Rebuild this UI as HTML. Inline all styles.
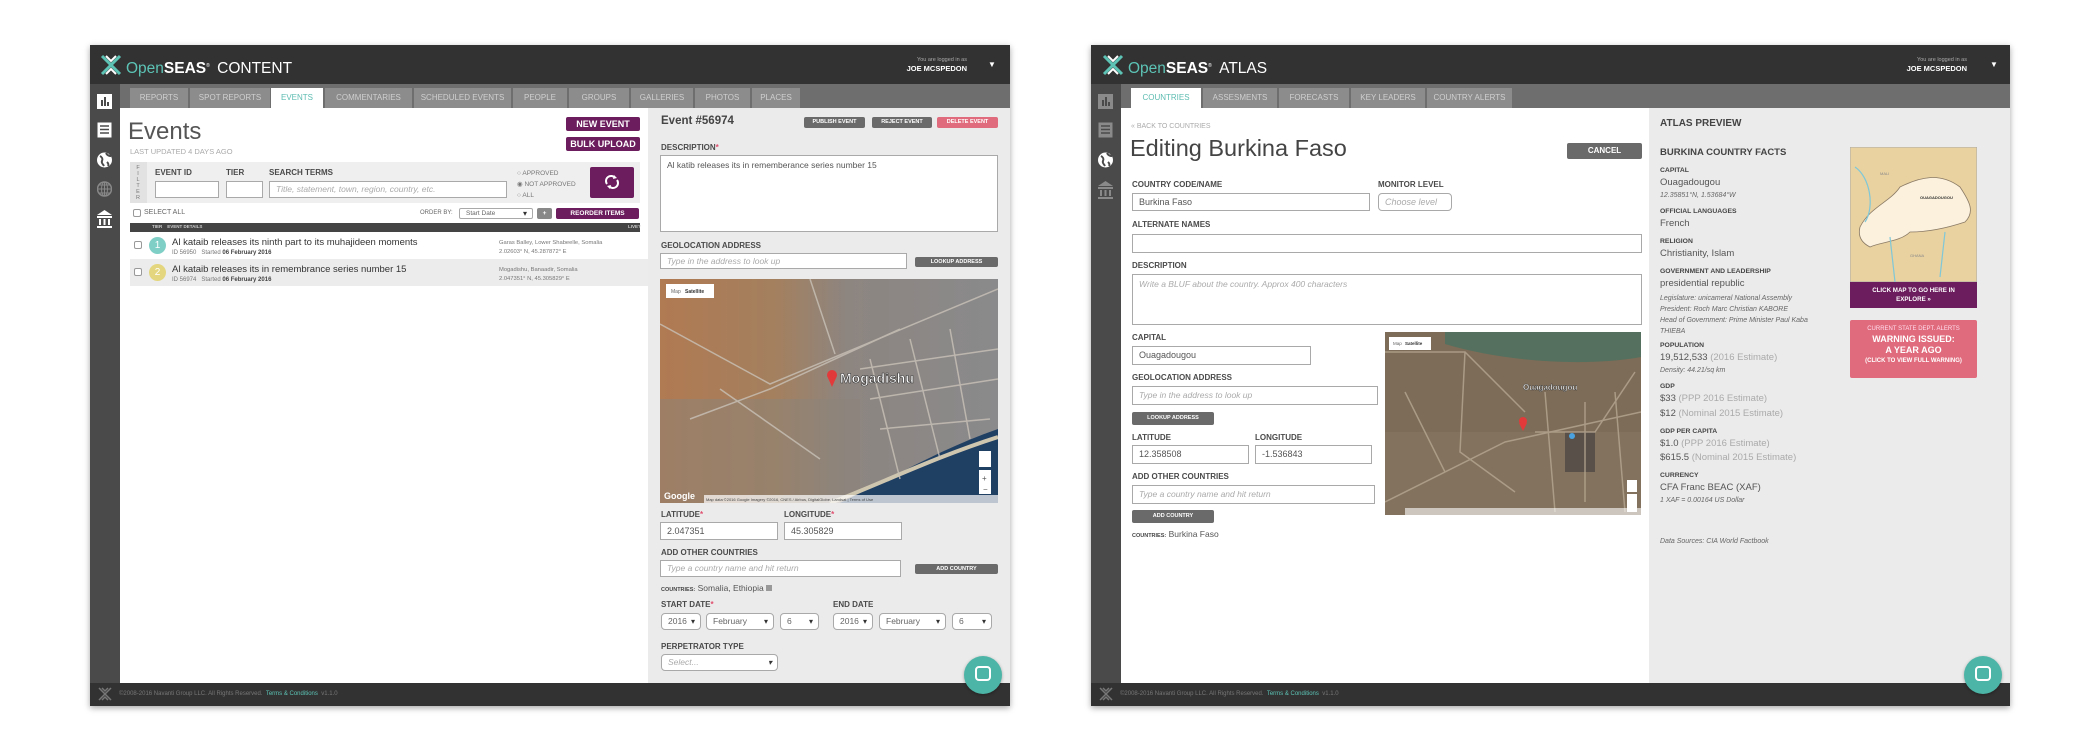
<!DOCTYPE html>
<html><head><meta charset="utf-8">
<style>
*{margin:0;padding:0;box-sizing:border-box}
body{width:2100px;height:750px;background:#fff;position:relative;overflow:hidden;font-family:"Liberation Sans",sans-serif;color:#444}
.a{position:absolute}
.lbl{position:absolute;font-weight:bold;font-size:8px;color:#4a4a4a;text-transform:uppercase;white-space:nowrap}
.inp{position:absolute;background:#fff;border:1px solid #a9a9a9;font-size:9px;color:#555;padding-left:6px;white-space:nowrap;overflow:hidden}
.ph{color:#aaa;font-style:italic}
.btn{position:absolute;background:#6a6a6a;color:#fff;font-weight:bold;font-size:6.5px;text-align:center;border-radius:2px;white-space:nowrap}
.pbtn{position:absolute;background:#6b1d5d;color:#fff;font-weight:bold;font-size:9px;text-align:center;border-radius:2px}
.tab{position:absolute;top:88px;height:20px;background:#8c8c8c;color:#cfcfcf;font-size:8px;text-align:center;line-height:20px;white-space:nowrap}
.tab.on{background:#fff;color:#5cbcb1}
.sel{position:absolute;background:#fff;border:1px solid #a9a9a9;border-radius:4px;font-size:8.5px;color:#666;padding-left:6px;white-space:nowrap}
.sel:after{content:"▾";position:absolute;right:5px;font-size:8px;color:#333}
.pl{position:absolute;left:1660px;font-weight:bold;font-size:6.8px;color:#444;white-space:nowrap}
.pv{position:absolute;left:1660px;font-size:9.5px;color:#555;white-space:nowrap}
.pi{position:absolute;left:1660px;font-size:7px;font-style:italic;color:#666;white-space:nowrap}
.g{color:#aaa}
</style></head><body>

<!-- ================= LEFT PANEL ================= -->
<div class="a" style="left:90px;top:45px;width:920px;height:661px;box-shadow:0 2px 6px rgba(0,0,0,.35)"></div>
<div class="a" style="left:90px;top:45px;width:920px;height:39px;background:#323232"></div>
<svg class="a" style="left:100px;top:54px" width="22" height="22" viewBox="0 0 22 22"><path d="M2 2L11 11L2 20M20 2L11 11L20 20" stroke="#5cc3b5" stroke-width="3" fill="none"/><path d="M6 2L11 7L16 2M6 20L11 15L16 20" stroke="#fff" stroke-width="2" fill="none"/></svg>
<div class="a" style="left:126px;top:56px;font-size:15.5px;color:#fff;white-space:nowrap;line-height:20px"><span style="color:#5cc3b5">Open</span><b>SEAS</b><sup style="font-size:5px">®</sup> <span style="font-weight:normal;margin-left:3px">CONTENT</span></div>
<div class="a" style="left:905px;top:57px;font-size:5.5px;color:#aaa;text-align:right;width:62px">You are logged in as</div>
<div class="a" style="left:905px;top:64px;font-size:7.5px;color:#fff;font-weight:bold;text-align:right;width:62px">JOE MCSPEDON</div>
<div class="a" style="left:988px;top:60px;font-size:8px;color:#fff">▼</div>

<div class="a" style="left:90px;top:84px;width:920px;height:24px;background:#6e6e6e"></div>
<div class="a" style="left:90px;top:84px;width:30px;height:599px;background:#4a4a4a"></div>
<div class="tab" style="left:130px;width:58px">REPORTS</div>
<div class="tab" style="left:190px;width:80px">SPOT REPORTS</div>
<div class="tab on" style="left:271px;width:52px">EVENTS</div>
<div class="tab" style="left:325px;width:87px">COMMENTARIES</div>
<div class="tab" style="left:414px;width:97px">SCHEDULED EVENTS</div>
<div class="tab" style="left:513px;width:54px">PEOPLE</div>
<div class="tab" style="left:569px;width:60px">GROUPS</div>
<div class="tab" style="left:631px;width:62px">GALLERIES</div>
<div class="tab" style="left:695px;width:55px">PHOTOS</div>
<div class="tab" style="left:752px;width:48px">PLACES</div>

<svg class="a" style="left:97px;top:94px" width="15" height="135" viewBox="0 0 15 135">
<rect x="0" y="0" width="15" height="15" fill="#fff"/><rect x="4" y="6" width="2" height="6" fill="#4a4a4a"/><rect x="7" y="3" width="2" height="9" fill="#4a4a4a"/><rect x="10" y="8" width="2" height="4" fill="#4a4a4a"/>
<rect x="0.5" y="28.5" width="14" height="15" fill="#fff"/><g stroke="#4a4a4a" stroke-width="1.5"><line x1="3" y1="32" x2="12" y2="32"/><line x1="3" y1="35.5" x2="12" y2="35.5"/><line x1="3" y1="39" x2="12" y2="39"/></g>
<circle cx="7.5" cy="66" r="7.5" fill="#fff"/><path d="M3 62c2 1 3 3 2 5s1 3 2 5M9 59c1 2 3 3 5 3M10 68c1 1 2 2 1 4" stroke="#4a4a4a" stroke-width="2" fill="none"/>
<circle cx="7.5" cy="95" r="7" fill="none" stroke="#888" stroke-width="1.5"/><path d="M0.5 95h14M7.5 88v14M2.5 91h10M2.5 99h10" stroke="#888" stroke-width="1"/><ellipse cx="7.5" cy="95" rx="3" ry="7" fill="none" stroke="#888"/>
<path d="M0 121l7.5-5 7.5 5z" fill="#fff"/><rect x="0" y="122" width="15" height="2" fill="#fff"/><rect x="2" y="125" width="2" height="6" fill="#fff"/><rect x="6.5" y="125" width="2" height="6" fill="#fff"/><rect x="11" y="125" width="2" height="6" fill="#fff"/><rect x="0" y="132" width="15" height="2" fill="#fff"/>
</svg>

<div class="a" style="left:120px;top:108px;width:528px;height:575px;background:#fff"></div>
<div class="a" style="left:128px;top:118px;font-size:24px;color:#555">Events</div>
<div class="a" style="left:130px;top:147px;font-size:7.5px;color:#aaa">LAST UPDATED 4 DAYS AGO</div>
<div class="pbtn" style="left:566px;top:117px;width:74px;height:14px;line-height:14px">NEW EVENT</div>
<div class="pbtn" style="left:566px;top:137px;width:74px;height:14px;line-height:14px">BULK UPLOAD</div>
<div class="a" style="left:130px;top:162px;width:510px;height:41px;background:#efefef"></div>
<div class="a" style="left:130px;top:162px;width:17px;height:41px;background:#e2e2e2"></div>
<div class="a" style="left:134px;top:165px;font-size:5.5px;color:#777;width:8px;line-height:6px;text-align:center">F<br>I<br>L<br>T<br>E<br>R</div>
<div class="lbl" style="left:155px;top:168px">EVENT ID</div>
<div class="lbl" style="left:226px;top:168px">TIER</div>
<div class="lbl" style="left:269px;top:168px">SEARCH TERMS</div>
<div class="inp" style="left:155px;top:181px;width:64px;height:17px"></div>
<div class="inp" style="left:226px;top:181px;width:37px;height:17px"></div>
<div class="inp ph" style="left:269px;top:181px;width:238px;height:17px;line-height:15px;font-size:8.5px">Title, statement, town, region, country, etc.</div>
<div class="a" style="left:517px;top:168px;font-size:6.5px;color:#777;line-height:11px">○ APPROVED<br>◉ NOT APPROVED<br>○ ALL</div>
<div class="pbtn" style="left:590px;top:167px;width:44px;height:31px"></div>
<svg class="a" style="left:603px;top:173px" width="18" height="18" viewBox="0 0 18 18"><path d="M4 11a5 5 0 0 1 8-6M14 7a5 5 0 0 1-8 6" stroke="#fff" stroke-width="2" fill="none"/><path d="M11 2l3 3-4 1zM7 16l-3-3 4-1z" fill="#fff"/></svg>
<div class="a" style="left:133px;top:209px;width:8px;height:8px;border:1px solid #999;border-radius:2px"></div>
<div class="a" style="left:144px;top:209px;font-size:7px;color:#666">SELECT ALL</div>
<div class="a" style="left:420px;top:210px;font-size:6px;color:#666">ORDER BY:</div>
<div class="sel" style="left:459px;top:208px;width:74px;height:11px;font-size:6.5px;line-height:9px;border-radius:2px">Start Date</div>
<div class="btn" style="left:537px;top:208px;width:15px;height:11px;line-height:11px;background:#888">+</div>
<div class="pbtn" style="left:556px;top:208px;width:83px;height:11px;line-height:11px;font-size:6.5px">REORDER ITEMS</div>
<div class="a" style="left:130px;top:223px;width:510px;height:9px;background:#444"></div>
<div class="a" style="left:152px;top:224px;font-size:4.5px;color:#ccc;font-weight:bold">TIER &nbsp;&nbsp; EVENT DETAILS</div>
<div class="a" style="left:628px;top:224px;font-size:4.5px;color:#ccc;font-weight:bold">LIVE?</div>
<div class="a" style="left:134px;top:241px;width:8px;height:8px;border:1px solid #999;border-radius:2px;background:#fff"></div>
<div class="a" style="left:149px;top:237px;width:17px;height:17px;border-radius:50%;background:#7fcfc6;color:#fff;font-size:10px;text-align:center;line-height:17px">1</div>
<div class="a" style="left:172px;top:237px;font-size:9.5px;color:#333;white-space:nowrap">Al kataib releases its ninth part to its muhajideen moments</div>
<div class="a" style="left:172px;top:250px;font-size:6px;color:#777;white-space:nowrap">ID 56950 &nbsp; Started <b style="color:#444">06 February 2016</b></div>
<div class="a" style="left:499px;top:239px;font-size:5.8px;color:#777;line-height:9px;white-space:nowrap">Garas Balley, Lower Shabeelle, Somalia<br>2.02603° N, 45.287872° E</div>
<div class="a" style="left:130px;top:259px;width:518px;height:27px;background:#ececec"></div>
<div class="a" style="left:134px;top:268px;width:8px;height:8px;border:1px solid #999;border-radius:2px;background:#fff"></div>
<div class="a" style="left:149px;top:264px;width:17px;height:17px;border-radius:50%;background:#e3d67f;color:#fff;font-size:10px;text-align:center;line-height:17px">2</div>
<div class="a" style="left:172px;top:264px;font-size:9.5px;color:#333;white-space:nowrap">Al kataib releases its in remembrance series number 15</div>
<div class="a" style="left:172px;top:277px;font-size:6px;color:#777;white-space:nowrap">ID 56974 &nbsp; Started <b style="color:#444">06 February 2016</b></div>
<div class="a" style="left:499px;top:266px;font-size:5.8px;color:#777;line-height:9px;white-space:nowrap">Mogadishu, Banaadir, Somalia<br>2.047351° N, 45.305829° E</div>

<div class="a" style="left:648px;top:108px;width:362px;height:575px;background:#ebebeb"></div>
<div class="a" style="left:661px;top:115px;font-size:11.5px;font-weight:bold;color:#444">Event #56974</div>
<div class="btn" style="left:804px;top:117px;width:61px;height:11px;line-height:11px;font-size:5.5px">PUBLISH EVENT</div>
<div class="btn" style="left:872px;top:117px;width:60px;height:11px;line-height:11px;font-size:5.5px">REJECT EVENT</div>
<div class="btn" style="left:937px;top:117px;width:61px;height:11px;line-height:11px;font-size:5.5px;background:#e06b7c">DELETE EVENT</div>
<div class="lbl" style="left:661px;top:143px">DESCRIPTION<span style="color:#e05070">*</span></div>
<div class="inp" style="left:660px;top:155px;width:338px;height:77px;font-size:8.5px;padding-top:4px;background:#fff">Al katib releases its in rememberance series number 15</div>
<div class="lbl" style="left:661px;top:241px">GEOLOCATION ADDRESS</div>
<div class="inp ph" style="left:660px;top:253px;width:247px;height:16px;line-height:14px;font-size:8.5px">Type in the address to look up</div>
<div class="btn" style="left:915px;top:257px;width:83px;height:10px;line-height:10px;font-size:5.5px">LOOKUP ADDRESS</div>
<svg class="a" style="left:660px;top:279px" width="338" height="224" viewBox="0 0 338 224">
<defs><linearGradient id="m1" x1="0" y1="0" x2="1" y2="0"><stop offset="0" stop-color="#b07a52"/><stop offset=".35" stop-color="#a3805f"/><stop offset=".55" stop-color="#8d8580"/><stop offset="1" stop-color="#8a8a8c"/></linearGradient></defs>
<rect width="338" height="224" fill="url(#m1)"/>
<rect x="0" y="120" width="200" height="104" fill="#8c8379" opacity=".5"/>
<path d="M180 224C230 200 280 170 338 150L338 224Z" fill="#1f3f63"/>
<path d="M170 224C220 205 275 178 338 158" stroke="#cfc6b0" stroke-width="4" fill="none"/>
<g stroke="#c9c2b8" stroke-width="1.5" fill="none" opacity=".8"><path d="M0 45L110 105L338 10"/><path d="M30 140L110 110L240 50"/><path d="M60 110L160 180"/><path d="M150 0L175 75"/><path d="M200 90L338 70M210 120L338 100M220 150L330 140M210 80L240 200M250 60L280 180M290 50L310 160"/></g>
<rect x="6" y="5" width="48" height="14" fill="#fff"/><text x="11" y="14" font-size="5" fill="#666" font-family="Liberation Sans">Map</text><text x="25" y="14" font-size="5" font-weight="bold" fill="#333" font-family="Liberation Sans">Satellite</text>
<circle cx="172" cy="96" r="5" fill="#e23a3a"/><path d="M168 99L172 108L176 99z" fill="#e23a3a"/>
<text x="180" y="104" font-size="14" fill="#fff" stroke="#333" stroke-width=".6" font-family="Liberation Sans" font-weight="bold">Mogadishu</text>
<rect x="319" y="172" width="12" height="16" fill="#fff"/><rect x="319" y="191" width="12" height="24" fill="#fff"/><text x="322" y="202" font-size="8" fill="#555">+</text><text x="323" y="213" font-size="8" fill="#555">−</text>
<text x="4" y="220" font-size="9" fill="#fff" font-family="Liberation Sans" font-weight="bold">Google</text>
<rect x="44" y="216" width="294" height="8" fill="#fff" opacity=".7"/><text x="46" y="222" font-size="4" fill="#444">Map data ©2016 Google Imagery ©2016, CNES / Airbus, DigitalGlobe, Landsat | Terms of Use</text>
</svg>
<div class="lbl" style="left:661px;top:510px">LATITUDE<span style="color:#e05070">*</span></div>
<div class="lbl" style="left:784px;top:510px">LONGITUDE<span style="color:#e05070">*</span></div>
<div class="inp" style="left:660px;top:522px;width:118px;height:18px;line-height:16px">2.047351</div>
<div class="inp" style="left:784px;top:522px;width:118px;height:18px;line-height:16px">45.305829</div>
<div class="lbl" style="left:661px;top:548px">ADD OTHER COUNTRIES</div>
<div class="inp ph" style="left:660px;top:560px;width:241px;height:17px;line-height:15px;font-size:8.5px">Type a country name and hit return</div>
<div class="btn" style="left:915px;top:564px;width:83px;height:10px;line-height:10px;font-size:5.5px">ADD COUNTRY</div>
<div class="a" style="left:661px;top:583px;font-size:8.5px;color:#555;white-space:nowrap"><b style="font-size:5.5px;color:#444">COUNTRIES:</b> Somalia, Ethiopia <span style="display:inline-block;width:6px;height:6px;background:#999"></span></div>
<div class="lbl" style="left:661px;top:600px">START DATE<span style="color:#e05070">*</span></div>
<div class="lbl" style="left:833px;top:600px">END DATE</div>
<div class="sel" style="left:661px;top:613px;width:40px;height:17px;line-height:15px">2016</div>
<div class="sel" style="left:706px;top:613px;width:68px;height:17px;line-height:15px">February</div>
<div class="sel" style="left:780px;top:613px;width:39px;height:17px;line-height:15px">6</div>
<div class="sel" style="left:833px;top:613px;width:40px;height:17px;line-height:15px">2016</div>
<div class="sel" style="left:879px;top:613px;width:67px;height:17px;line-height:15px">February</div>
<div class="sel" style="left:952px;top:613px;width:40px;height:17px;line-height:15px">6</div>
<div class="lbl" style="left:661px;top:642px">PERPETRATOR TYPE</div>
<div class="sel ph" style="left:661px;top:654px;width:117px;height:17px;line-height:15px;color:#aaa;font-style:italic">Select...</div>

<div class="a" style="left:90px;top:683px;width:920px;height:23px;background:#323232"></div>
<svg class="a" style="left:98px;top:687px" width="14" height="14" viewBox="0 0 14 14"><path d="M1 1L7 7L1 13M13 1L7 7L13 13M4 1L7 4L10 1M4 13L7 10L10 13" stroke="#777" stroke-width="1.5" fill="none"/></svg>
<div class="a" style="left:119px;top:691px;font-size:6px;color:#777;white-space:nowrap">©2008-2016 Navanti Group LLC. All Rights Reserved. &nbsp;<span style="color:#5cc3b5">Terms &amp; Conditions</span> &nbsp;v1.1.0</div>
<div class="a" style="left:964px;top:656px;width:38px;height:38px;border-radius:50%;background:#4db5a7;box-shadow:0 1px 3px rgba(0,0,0,.3)"></div>
<div class="a" style="left:975px;top:666px;width:16px;height:15px;border:2px solid #fff;border-radius:4px"></div>

<!-- ================= RIGHT PANEL ================= -->
<div class="a" style="left:1091px;top:45px;width:919px;height:661px;box-shadow:0 2px 6px rgba(0,0,0,.35)"></div>
<div class="a" style="left:1091px;top:45px;width:919px;height:39px;background:#323232"></div>
<svg class="a" style="left:1102px;top:54px" width="22" height="22" viewBox="0 0 22 22"><path d="M2 2L11 11L2 20M20 2L11 11L20 20" stroke="#5cc3b5" stroke-width="3" fill="none"/><path d="M6 2L11 7L16 2M6 20L11 15L16 20" stroke="#fff" stroke-width="2" fill="none"/></svg>
<div class="a" style="left:1128px;top:56px;font-size:15.5px;color:#fff;white-space:nowrap;line-height:20px"><span style="color:#5cc3b5">Open</span><b>SEAS</b><sup style="font-size:5px">®</sup> <span style="margin-left:3px">ATLAS</span></div>
<div class="a" style="left:1905px;top:57px;font-size:5.5px;color:#aaa;text-align:right;width:62px">You are logged in as</div>
<div class="a" style="left:1905px;top:64px;font-size:7.5px;color:#fff;font-weight:bold;text-align:right;width:62px">JOE MCSPEDON</div>
<div class="a" style="left:1990px;top:60px;font-size:8px;color:#fff">▼</div>
<div class="a" style="left:1091px;top:84px;width:919px;height:24px;background:#6e6e6e"></div>
<div class="a" style="left:1091px;top:84px;width:30px;height:599px;background:#4a4a4a"></div>
<div class="tab on" style="left:1131px;width:70px">COUNTRIES</div>
<div class="tab" style="left:1203px;width:74px">ASSESMENTS</div>
<div class="tab" style="left:1279px;width:70px">FORECASTS</div>
<div class="tab" style="left:1351px;width:74px">KEY LEADERS</div>
<div class="tab" style="left:1427px;width:85px">COUNTRY ALERTS</div>
<svg class="a" style="left:1098px;top:94px" width="15" height="135" viewBox="0 0 15 135">
<rect x="0" y="0" width="15" height="15" fill="#8a8a8a"/><rect x="4" y="6" width="2" height="6" fill="#4a4a4a"/><rect x="7" y="3" width="2" height="9" fill="#4a4a4a"/><rect x="10" y="8" width="2" height="4" fill="#4a4a4a"/>
<rect x="0.5" y="28.5" width="14" height="15" fill="#8a8a8a"/><g stroke="#4a4a4a" stroke-width="1.5"><line x1="3" y1="32" x2="12" y2="32"/><line x1="3" y1="35.5" x2="12" y2="35.5"/><line x1="3" y1="39" x2="12" y2="39"/></g>
<circle cx="7.5" cy="66" r="7.5" fill="#fff"/><path d="M3 62c2 1 3 3 2 5s1 3 2 5M9 59c1 2 3 3 5 3M10 68c1 1 2 2 1 4" stroke="#4a4a4a" stroke-width="2" fill="none"/>
<path d="M0 92l7.5-5 7.5 5z" fill="#8a8a8a"/><rect x="0" y="93" width="15" height="2" fill="#8a8a8a"/><rect x="2" y="96" width="2" height="6" fill="#8a8a8a"/><rect x="6.5" y="96" width="2" height="6" fill="#8a8a8a"/><rect x="11" y="96" width="2" height="6" fill="#8a8a8a"/><rect x="0" y="103" width="15" height="2" fill="#8a8a8a"/>
</svg>
<div class="a" style="left:1121px;top:108px;width:528px;height:575px;background:#fff"></div>
<div class="a" style="left:1131px;top:123px;font-size:7px;color:#aaa">« BACK TO COUNTRIES</div>
<div class="a" style="left:1130px;top:135px;font-size:23.5px;color:#444;white-space:nowrap">Editing Burkina Faso</div>
<div class="btn" style="left:1567px;top:143px;width:75px;height:16px;line-height:16px;font-size:8px">CANCEL</div>
<div class="lbl" style="left:1132px;top:180px">COUNTRY CODE/NAME</div>
<div class="lbl" style="left:1378px;top:180px">MONITOR LEVEL</div>
<div class="inp" style="left:1132px;top:193px;width:238px;height:18px;line-height:16px">Burkina Faso</div>
<div class="inp ph" style="left:1378px;top:193px;width:74px;height:18px;line-height:16px;border-radius:4px">Choose level</div>
<div class="lbl" style="left:1132px;top:220px">ALTERNATE NAMES</div>
<div class="inp" style="left:1132px;top:234px;width:510px;height:19px"></div>
<div class="lbl" style="left:1132px;top:261px">DESCRIPTION</div>
<div class="inp ph" style="left:1132px;top:274px;width:510px;height:51px;padding-top:4px;font-size:8.5px">Write a BLUF about the country. Approx 400 characters</div>
<div class="lbl" style="left:1132px;top:333px">CAPITAL</div>
<div class="inp" style="left:1132px;top:346px;width:179px;height:19px;line-height:17px">Ouagadougou</div>
<div class="lbl" style="left:1132px;top:373px">GEOLOCATION ADDRESS</div>
<div class="inp ph" style="left:1132px;top:386px;width:246px;height:19px;line-height:17px;font-size:8.5px">Type in the address to look up</div>
<div class="btn" style="left:1132px;top:412px;width:82px;height:13px;line-height:13px;font-size:5.5px">LOOKUP ADDRESS</div>
<div class="lbl" style="left:1132px;top:433px">LATITUDE</div>
<div class="lbl" style="left:1255px;top:433px">LONGITUDE</div>
<div class="inp" style="left:1132px;top:445px;width:117px;height:19px;line-height:17px">12.358508</div>
<div class="inp" style="left:1255px;top:445px;width:117px;height:19px;line-height:17px">-1.536843</div>
<div class="lbl" style="left:1132px;top:472px">ADD OTHER COUNTRIES</div>
<div class="inp ph" style="left:1132px;top:485px;width:243px;height:19px;line-height:17px;font-size:8.5px">Type a country name and hit return</div>
<div class="btn" style="left:1132px;top:510px;width:82px;height:13px;line-height:13px;font-size:5.5px">ADD COUNTRY</div>
<div class="a" style="left:1132px;top:529px;font-size:8.5px;color:#555;white-space:nowrap"><b style="font-size:5.5px;color:#444">COUNTRIES:</b> Burkina Faso</div>
<svg class="a" style="left:1385px;top:332px" width="256" height="183" viewBox="0 0 256 183">
<rect width="256" height="183" fill="#7d6c57"/>
<path d="M60 0H256V25C200 35 120 30 60 12Z" fill="#55705e"/>
<rect x="0" y="100" width="256" height="83" fill="#867560" opacity=".7"/>
<rect x="180" y="100" width="30" height="40" fill="#3d3a3d" opacity=".6"/>
<g stroke="#b3a48f" stroke-width="1.5" fill="none" opacity=".85"><path d="M0 20L80 20L140 80"/><path d="M80 20L75 120L130 160"/><path d="M0 170L120 110L256 80"/><path d="M150 100L210 100L250 40"/><path d="M160 60L170 180M200 70L200 170M230 60L240 180M20 60L60 140"/></g>
<rect x="4" y="5" width="42" height="13" fill="#fff"/><text x="8" y="13" font-size="4.5" fill="#666">Map</text><text x="20" y="13" font-size="4.5" font-weight="bold" fill="#333">Satellite</text>
<circle cx="138" cy="89" r="4" fill="#e23a3a"/><path d="M134 91L138 99L142 91z" fill="#e23a3a"/>
<text x="138" y="58" font-size="8" fill="#fff" stroke="#333" stroke-width=".4" font-weight="bold">Ouagadougou</text>
<circle cx="187" cy="104" r="3" fill="#4aa3e0"/>
<rect x="242" y="148" width="10" height="12" fill="#fff"/><rect x="242" y="162" width="10" height="18" fill="#fff"/>
<rect x="20" y="176" width="236" height="7" fill="#fff" opacity=".6"/>
</svg>
<div class="a" style="left:1649px;top:108px;width:361px;height:575px;background:#ebebeb"></div>
<div class="a" style="left:1660px;top:118px;font-size:10px;font-weight:bold;color:#444">ATLAS PREVIEW</div>
<div class="a" style="left:1660px;top:147px;font-size:9.5px;font-weight:bold;color:#444">BURKINA COUNTRY FACTS</div>
<div class="pl" style="top:167px">CAPITAL</div>
<div class="pv" style="top:177px">Ouagadougou</div>
<div class="pi" style="top:192px">12.35851°N, 1.53684°W</div>
<div class="pl" style="top:208px">OFFICIAL LANGUAGES</div>
<div class="pv" style="top:218px">French</div>
<div class="pl" style="top:238px">RELIGION</div>
<div class="pv" style="top:248px">Christianity, Islam</div>
<div class="pl" style="top:268px">GOVERNMENT AND LEADERSHIP</div>
<div class="pv" style="top:278px">presidential republic</div>
<div class="pi" style="top:293px;line-height:11px">Legislature: unicameral National Assembly<br>President: Roch Marc Christian KABORE<br>Head of Government: Prime Minister Paul Kaba<br>THIEBA</div>
<div class="pl" style="top:342px">POPULATION</div>
<div class="pv" style="top:352px">19,512,533 <span class="g">(2016 Estimate)</span></div>
<div class="pi" style="top:367px">Density: 44.21/sq km</div>
<div class="pl" style="top:383px">GDP</div>
<div class="pv" style="top:393px">$33 <span class="g">(PPP 2016 Estimate)</span></div>
<div class="pv" style="top:408px">$12 <span class="g">(Nominal 2015 Estimate)</span></div>
<div class="pl" style="top:428px">GDP PER CAPITA</div>
<div class="pv" style="top:438px">$1.0 <span class="g">(PPP 2016 Estimate)</span></div>
<div class="pv" style="top:452px">$615.5 <span class="g">(Nominal 2015 Estimate)</span></div>
<div class="pl" style="top:472px">CURRENCY</div>
<div class="pv" style="top:482px">CFA Franc BEAC (XAF)</div>
<div class="pi" style="top:497px">1 XAF = 0.00164 US Dollar</div>
<div class="pi" style="top:538px">Data Sources: CIA World Factbook</div>
<svg class="a" style="left:1850px;top:147px" width="127" height="135" viewBox="0 0 127 135">
<rect width="127" height="135" fill="#e9d2a0" stroke="#aaa"/>
<path d="M10 80C20 60 40 55 50 40C70 30 90 25 110 40C120 55 125 65 115 75C100 80 80 85 60 85C50 95 30 95 20 100C10 95 8 88 10 80Z" fill="#fbf1dc" stroke="#8a7a66" stroke-width=".8"/>
<path d="M40 90L45 135M5 20C20 30 25 60 15 75M95 85L90 130" stroke="#7fc7d8" stroke-width="1.2" fill="none"/>
<text x="70" y="52" font-size="4" fill="#333" font-weight="bold">OUAGADOUGOU</text>
<text x="30" y="28" font-size="4" fill="#888">MALI</text><text x="60" y="110" font-size="4" fill="#888">GHANA</text>
</svg>
<div class="a" style="left:1850px;top:282px;width:127px;height:26px;background:#6b1d5d;color:#fff;font-size:6.2px;font-weight:bold;text-align:center;line-height:9px;padding-top:4px">CLICK MAP TO GO HERE IN<br>EXPLORE »</div>
<div class="a" style="left:1850px;top:320px;width:127px;height:58px;background:#e06b7c;color:#fff;text-align:center;border-radius:2px">
<div style="font-size:6px;margin-top:6px;color:#fde">CURRENT STATE DEPT. ALERTS</div>
<div style="font-size:9px;font-weight:bold;line-height:11px;margin-top:2px">WARNING ISSUED:<br>A YEAR AGO</div>
<div style="font-size:6px;font-weight:bold;margin-top:2px">(CLICK TO VIEW FULL WARNING)</div></div>
<div class="a" style="left:1091px;top:683px;width:919px;height:23px;background:#323232"></div>
<svg class="a" style="left:1099px;top:687px" width="14" height="14" viewBox="0 0 14 14"><path d="M1 1L7 7L1 13M13 1L7 7L13 13M4 1L7 4L10 1M4 13L7 10L10 13" stroke="#777" stroke-width="1.5" fill="none"/></svg>
<div class="a" style="left:1120px;top:691px;font-size:6px;color:#777;white-space:nowrap">©2008-2016 Navanti Group LLC. All Rights Reserved. &nbsp;<span style="color:#5cc3b5">Terms &amp; Conditions</span> &nbsp;v1.1.0</div>
<div class="a" style="left:1964px;top:656px;width:38px;height:38px;border-radius:50%;background:#4db5a7;box-shadow:0 1px 3px rgba(0,0,0,.3)"></div>
<div class="a" style="left:1975px;top:666px;width:16px;height:15px;border:2px solid #fff;border-radius:4px"></div>
</body></html>
